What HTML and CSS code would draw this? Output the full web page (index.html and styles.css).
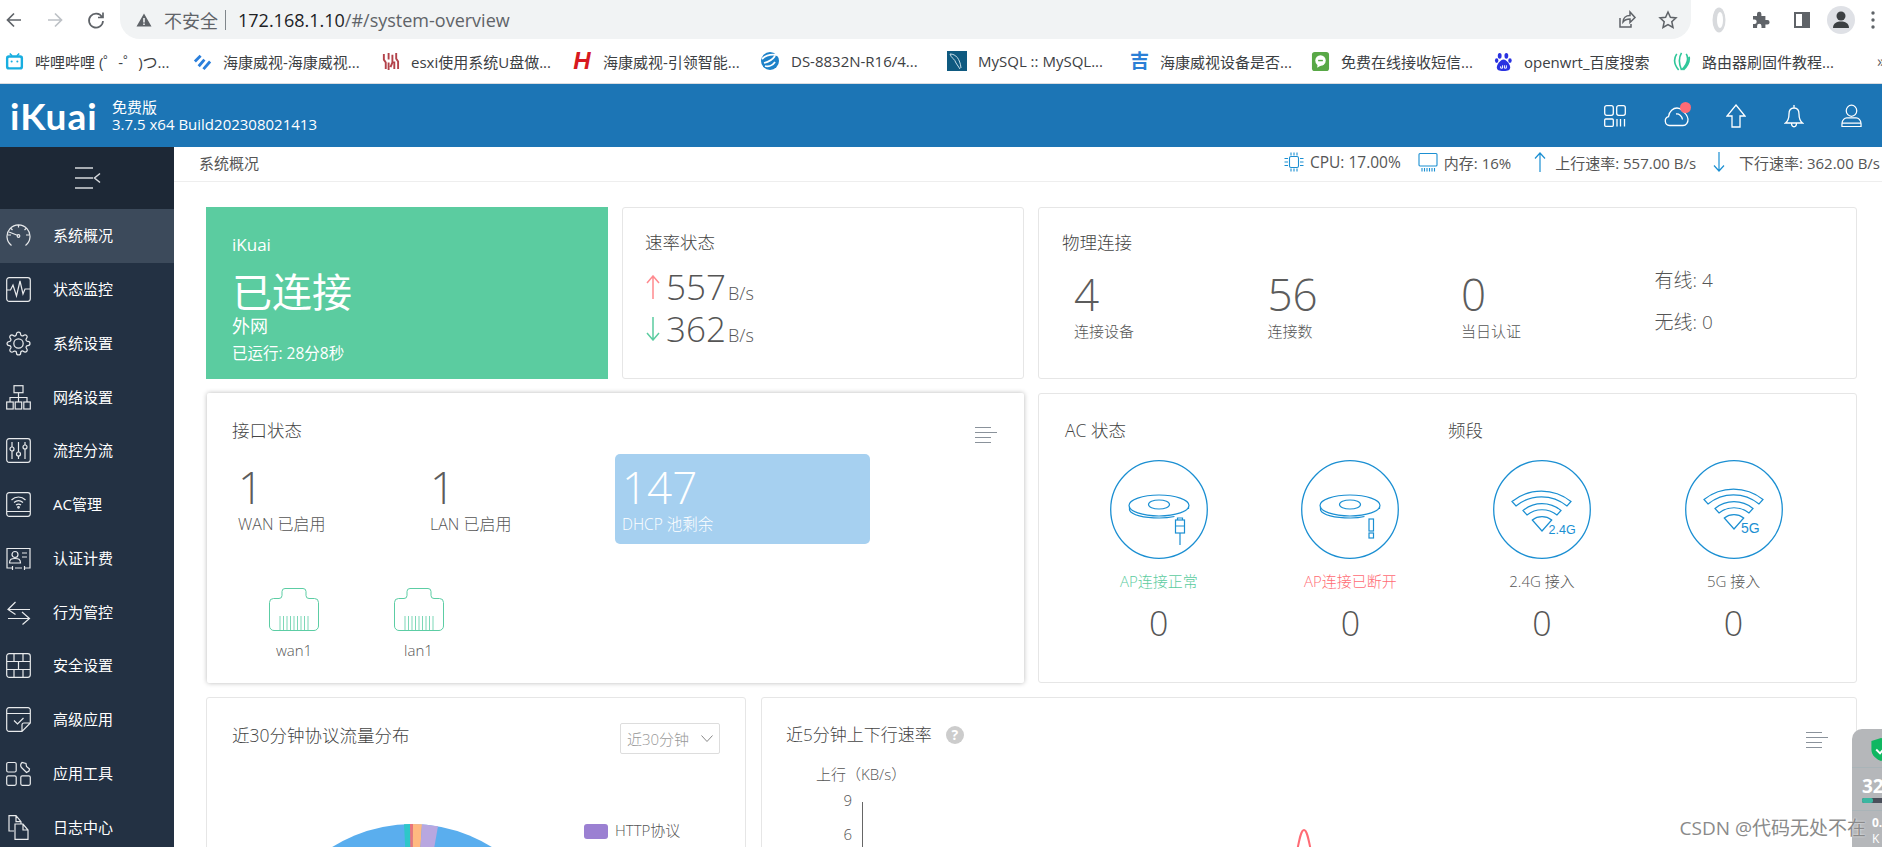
FILE: index.html
```html
<!DOCTYPE html>
<html lang="zh-CN">
<head>
<meta charset="utf-8">
<title>iKuai</title>
<link rel="stylesheet" href="styles.css">
</head>
<body>
<header class="toolbar">
  <div class="nav-btns">
    <svg class="nav-ico" viewBox="0 0 20 20"><path d="M17 10H4M10 3.5 3.5 10l6.5 6.500"/></svg>
    <svg class="nav-ico nav-off" viewBox="0 0 20 20"><path d="M3 10h13M10 3.500 16.500 10 10 16.500"/></svg>
    <svg class="nav-ico" viewBox="0 0 20 20"><path d="M16 7a7 7 0 1 0 1 4M17 2.500V7.500h-5"/></svg>
  </div>
  <div class="omnibox">
    <div class="url">
      <svg class="warn" viewBox="0 0 16 16"><path d="M8 1.500 15.500 14.500H.5zM7.200 6v4.500h1.600V6zM7.200 11.500v1.500h1.600v-1.500z" fill-rule="evenodd"/></svg>
      <span class="insecure">不安全</span><span class="url-sep"></span><span class="host">172.168.1.10</span><span class="path">/#/system-overview</span>
    </div>
    <div class="omni-actions">
      <svg class="chrome-ico" viewBox="0 0 20 20"><path d="M3 8v9h11v-3M6 12c0-4 3-6.500 7-6.500V2l5 5.500-5 5V9c-3 0-5.500 1-7 3z"/></svg>
      <svg class="chrome-ico" viewBox="0 0 20 20"><path d="m10 2 2.400 5.300 5.600.6-4.200 3.800 1.200 5.800-5-3-5 3 1.200-5.800L2 7.900l5.600-.6z"/></svg>
    </div>
  </div>
  <div class="chrome-right">
    <svg class="ext-pill" viewBox="0 0 14 26"><ellipse cx="7" cy="13" rx="6.500" ry="12.500" fill="#d8dadd"/><ellipse cx="8" cy="13" rx="3" ry="8" fill="#fff"/></svg>
    <svg class="ext-ico" viewBox="0 0 20 20"><path class="solid" d="M3 6h4V4a2.200 2.200 0 0 1 4.400 0v2h4v4h2a2.200 2.200 0 0 1 0 4.400h-2V18H11.500v-2a2.200 2.200 0 0 0-4.400 0v2H3v-4h1.500a2.200 2.200 0 0 0 0-4.400H3z"/></svg>
    <svg class="ext-ico" viewBox="0 0 20 20"><path class="solid" fill-rule="evenodd" d="M2 2h16v16H2zM4 4v12h6V4z"/></svg>
    <svg class="avatar" viewBox="0 0 28 28"><circle cx="14" cy="14" r="14" fill="#dfe1e6"/><circle cx="14" cy="10" r="4.500" fill="#3c4043"/><path d="M6 22c0-5 4-6.500 8-6.500s8 1.500 8 6.500z" fill="#3c4043"/></svg>
    <svg class="kebab" viewBox="0 0 4 20"><circle cx="2" cy="3" r="1.700"/><circle cx="2" cy="10" r="1.700"/><circle cx="2" cy="17" r="1.700"/></svg>
  </div>
</header>

<nav class="bookmarks">
  <a class="bm bm-1"><svg class="bm-ico" viewBox="0 0 20 20"><path d="M5 1.500 7.500 4M15 1.500 12.500 4" stroke="#18aee0" stroke-width="1.600" fill="none"/><rect x="1" y="3.500" width="18" height="15" rx="3" fill="#18aee0"/><rect x="3.500" y="6" width="13" height="10" rx="1" fill="#fff"/><circle cx="7" cy="10" r="1.100" fill="#18aee0"/><circle cx="13" cy="10" r="1.100" fill="#18aee0"/></svg><span>哔哩哔哩 (゜-゜)つ...</span></a>
  <a class="bm bm-2"><svg class="bm-ico" viewBox="0 0 20 20"><path d="m2 10 6-6M6 15l6-7M11 18l7-8" stroke="#2a7fdc" stroke-width="3" fill="none"/></svg><span>海康威视-海康威视...</span></a>
  <a class="bm bm-3"><svg class="bm-ico" viewBox="0 0 20 20"><path d="M3 2v6l2 3v7M8 1v7M8 11v8M12 3v8l-2 5M16 1v6l2 3v8M14 10v8" stroke="#b3424a" stroke-width="2" fill="none"/></svg><span>esxi使用系统U盘做...</span></a>
  <a class="bm bm-4"><span class="bm-h">H</span><span>海康威视-引领智能...</span></a>
  <a class="bm bm-5"><svg class="bm-ico bm-ico-lg" viewBox="0 0 20 20"><circle cx="10" cy="10" r="9" fill="#1d82c9"/><path d="M4 12c4-1 9-4 11-7M5 15c4 1 8-1 10-4M2 8c3-3 9-5 15-4" stroke="#fff" stroke-width="1.800" fill="none"/></svg><span>DS-8832N-R16/4...</span></a>
  <a class="bm bm-6"><svg class="bm-ico bm-ico-lg" viewBox="0 0 20 20"><rect width="20" height="20" fill="#0f5a80"/><path d="M3 3c6 0 10 5 11 14M3 3c1 4 5 5 6 9l4 6" stroke="#c9e0ea" stroke-width="1" fill="none"/></svg><span>MySQL :: MySQL...</span></a>
  <a class="bm bm-7"><span class="bm-ji">吉</span><span>海康威视设备是否...</span></a>
  <a class="bm bm-8"><svg class="bm-ico" viewBox="0 0 20 20"><rect x="1" width="18" height="20" rx="3" fill="#58a846"/><circle cx="10" cy="9" r="5.500" fill="#fff"/><path d="m7 13-.5 3.500L11 14z" fill="#fff"/><path d="M7.500 9h5" stroke="#58a846" stroke-width="1.500"/></svg><span>免费在线接收短信...</span></a>
  <a class="bm bm-9"><svg class="bm-ico" viewBox="0 0 20 20" fill="#2932e1"><ellipse cx="6" cy="4" rx="2" ry="3"/><ellipse cx="13" cy="4" rx="2" ry="3"/><ellipse cx="2.800" cy="9" rx="1.800" ry="2.500"/><ellipse cx="16.800" cy="9" rx="1.800" ry="2.500"/><path d="M10 8c3 0 7 5 7 8s-2 4-7 4-7-1-7-4 4-8 7-8z"/><path d="M7 15v2h2v-3M11 14v3h2v-3" stroke="#fff" fill="none"/></svg><span>openwrt_百度搜索</span></a>
  <a class="bm bm-10"><svg class="bm-ico" viewBox="0 0 20 20" fill="none" stroke="#2fc79a" stroke-width="1.700"><path d="M5 2C1 8 2 13 7 19M10 1c-3 5-3 11 0 18M15 2c3 5 1 11-5 17M18 5c1 5-2 10-6 14"/></svg><span>路由器刷固件教程...</span></a>
  <span class="bm-more">»</span>
</nav>

<header class="appbar">
  <div class="brand">
    <span class="logo">iKuai</span>
    <div class="edition"><span>免费版</span><span>3.7.5 x64 Build202308021413</span></div>
  </div>
  <div class="app-actions">
    <svg class="act-ico" viewBox="0 0 22 22"><rect x=".7" y=".7" width="8.600" height="9.600" rx="2"/><rect x="12.700" y=".7" width="8.600" height="9.600" rx="2"/><rect x=".7" y="14" width="8.600" height="7.300" rx="1"/><path d="M13 14v7.500M16.500 14v7.500M20.500 14v7.500"/></svg>
    <div class="cloud-wrap">
      <svg class="act-ico act-cloud" viewBox="0 0 26 22"><path d="M5.500 20.500a4.500 4.500 0 0 1-1-8.800C5 6 9.500 3 13 3c2 0 4 1 5 2.500M18 6c3.500 2 5.500 5 6 8 .3 3.500-2 6.500-5 6.500H5.500M12 9c3-.5 6 2 6.500 5.500"/></svg>
      <span class="cloud-dot"></span>
    </div>
    <svg class="act-ico act-up" viewBox="0 0 20 24"><path d="M10 1 19 12h-5v11H6V12H1z"/></svg>
    <svg class="act-ico act-bell" viewBox="0 0 20 24"><path d="M10 1v3M10 4c-3.500 0-5 3-5 6 0 4-1 7-3.500 9h17C16 17 15 14 15 10c0-3-1.500-6-5-6zM7.500 19c0 5 5 5 5 0"/></svg>
    <svg class="act-ico act-user" viewBox="0 0 22 24"><ellipse cx="11" cy="6.500" rx="5.500" ry="5.800"/><path d="M1 23v-3c0-4 3-6 5-6h10c2 0 5 2 5 6v3zM1 19.500h20"/></svg>
  </div>
</header>

<div class="app">
  <aside class="sidebar">
    <div class="side-toggle">
      <svg class="toggle-ico" viewBox="0 0 26 22"><path d="M0 1h18M0 11h18M0 21h18M25 6.500l-5.500 4.500 5.500 4.500"/></svg>
    </div>
    <ul class="menu">
      <li class="menu-item is-active"><svg class="menu-ico" viewBox="0 0 25 25"><path d="M5.500 22.500A11.500 11.500 0 1 1 19.500 22.500M12.500 1.500v3M2 12h3M20 12h3M4.500 5l2 2M18.500 7l2-2M3 9l9 3.500"/><circle cx="12.500" cy="13" r="1.300"/></svg><span>系统概况</span></li>
      <li class="menu-item"><svg class="menu-ico" viewBox="0 0 25 25"><rect x=".7" y=".7" width="23.600" height="23.600" rx="2.500"/><path d="M1 13h3.500l2.500-5 3.500 11L14 4l3 13 2-5h5"/></svg><span>状态监控</span></li>
      <li class="menu-item"><svg class="menu-ico" viewBox="0 0 24 24"><circle cx="12" cy="12" r="4.500"/><path d="M19.400 15a1.650 1.650 0 0 0 .33 1.820l.06.06a2 2 0 0 1 0 2.830 2 2 0 0 1-2.830 0l-.06-.06a1.650 1.650 0 0 0-1.820-.33 1.650 1.650 0 0 0-1 1.510V21a2 2 0 0 1-2 2 2 2 0 0 1-2-2v-.09A1.650 1.650 0 0 0 9 19.400a1.650 1.650 0 0 0-1.820.33l-.06.06a2 2 0 0 1-2.830 0 2 2 0 0 1 0-2.830l.06-.06a1.650 1.650 0 0 0 .33-1.820 1.650 1.650 0 0 0-1.510-1H3a2 2 0 0 1-2-2 2 2 0 0 1 2-2h.09A1.650 1.650 0 0 0 4.600 9a1.650 1.650 0 0 0-.33-1.820l-.06-.06a2 2 0 0 1 0-2.830 2 2 0 0 1 2.830 0l.06.06a1.650 1.650 0 0 0 1.820.33H9a1.650 1.650 0 0 0 1-1.510V3a2 2 0 0 1 2-2 2 2 0 0 1 2 2v.09a1.650 1.650 0 0 0 1 1.510 1.650 1.650 0 0 0 1.820-.33l.06-.06a2 2 0 0 1 2.830 0 2 2 0 0 1 0 2.830l-.06.06a1.650 1.650 0 0 0-.33 1.820V9a1.650 1.650 0 0 0 1.510 1H21a2 2 0 0 1 2 2 2 2 0 0 1-2 2h-.09a1.650 1.650 0 0 0-1.510 1z"/></svg><span>系统设置</span></li>
      <li class="menu-item"><svg class="menu-ico" viewBox="0 0 25 25"><rect x="8" y=".7" width="9" height="7"/><rect x=".7" y="17" width="6.500" height="7"/><rect x="9.200" y="17" width="6.500" height="7"/><rect x="17.800" y="17" width="6.500" height="7"/><path d="M12.500 8v9M4 17v-4.500h17V17"/></svg><span>网络设置</span></li>
      <li class="menu-item"><svg class="menu-ico" viewBox="0 0 25 25"><rect x=".7" y=".7" width="23.600" height="23.600" rx="2.500"/><path d="M6 4v5M6 13v8M12.500 4v10M12.500 18v3M19 4v3M19 11v10"/><circle cx="6" cy="11" r="2"/><circle cx="12.500" cy="16" r="2"/><circle cx="19" cy="9" r="2"/></svg><span>流控分流</span></li>
      <li class="menu-item"><svg class="menu-ico" viewBox="0 0 25 25"><rect x=".7" y=".7" width="23.600" height="23.600" rx="2.500"/><path d="M1 19.500h23M5.500 8c4-4 10-4 14 0M8 10.500c3-2.500 6-2.500 9 0M10 13c1.500-1 3.500-1 5 0"/><circle cx="12.500" cy="15.300" r=".8"/></svg><span>AC管理</span></li>
      <li class="menu-item"><svg class="menu-ico" viewBox="0 0 25 25"><path d="M6 22H1V2.500h23V22h-5M9 22h7"/><circle cx="9" cy="8.500" r="3"/><path d="M3.500 17c0-4 2-4.500 5.500-4.500s5.500.5 5.500 4.500zM16 7h5M16 11h5M6.500 20v4M18.500 20v4"/></svg><span>认证计费</span></li>
      <li class="menu-item"><svg class="menu-ico" viewBox="0 0 25 25"><path d="M24 9.500H3M9.500 2 2 9.500l7.500 5M2 18.500h21M16 12l7.500 6.500-7 6"/></svg><span>行为管控</span></li>
      <li class="menu-item"><svg class="menu-ico" viewBox="0 0 25 25"><rect x=".7" y=".7" width="23.600" height="23.600" rx="2.500"/><path d="M1 8.500h23M1 16.500h23M8 1v7.500M17 1v7.500M12.500 8.500v8M8 16.500v8M17 16.500v8"/></svg><span>安全设置</span></li>
      <li class="menu-item"><svg class="menu-ico" viewBox="0 0 25 25"><path d="M24.300 16V3A2.300 2.300 0 0 0 22 .7H3A2.300 2.300 0 0 0 .7 3v19A2.300 2.300 0 0 0 3 24.300h13zM24.300 16H18a2 2 0 0 0-2 2v6.300M1 6.500h23M8 13.500l3.500 3.500 6-6"/></svg><span>高级应用</span></li>
      <li class="menu-item"><svg class="menu-ico" viewBox="0 0 25 25"><rect x=".7" y="1.500" width="9.500" height="9.500" rx="1.500"/><rect x=".7" y="14.800" width="9.500" height="9.500" rx="1.500"/><rect x="14.800" y="14.800" width="9.500" height="9.500" rx="1.500"/><path d="M16 1.500a3.500 3.500 0 0 0-.5 5l5 5 2.500-1.500 .5-2-3-2.500-.5-3z"/></svg><span>应用工具</span></li>
      <li class="menu-item"><svg class="menu-ico" viewBox="0 0 25 25"><path d="M8 16H3V.7h7l5 6V9M10 .7v6h5M9 9h8l5 6v9.300H9zM17 9v6h5"/></svg><span>日志中心</span></li>
    </ul>
  </aside>

  <main class="main">
    <div class="crumbs">
      <span class="crumb-title">系统概况</span>
      <div class="sys-stats">
        <svg class="st-ico" viewBox="0 0 20 20"><rect x="5.500" y="4.500" width="9" height="11" rx="1.500"/><path d="M7 .5v3M10 .5v3M13 .5v3M7 16.500v3M10 16.500v3M13 16.500v3M.5 6.500h3.500M.5 10h3.500M.5 13.500h3.500M16 6.500h3.500M16 10h3.500M16 13.500h3.500"/></svg>
        <span class="st-text st-cpu">CPU: 17.00%</span>
        <svg class="st-ico" viewBox="0 0 20 20"><rect x="1" y="1.500" width="18" height="12.500" rx="1"/><path d="M4 16v3.500M6.500 16v3.500M9 16v3.500M11.500 16v3.500M14 16v3.500M16.500 16v3.500"/></svg>
        <span class="st-text st-ram">内存: 16%</span>
        <svg class="st-arrow st-up" viewBox="0 0 12 20"><path d="M6 20V1M1 6.500 6 1l5 5.500"/></svg>
        <span class="st-text st-upt">上行速率: 557.00 B/s</span>
        <svg class="st-arrow st-down" viewBox="0 0 12 20"><path d="M6 0v19M1 13.500 6 19l5-5.500"/></svg>
        <span class="st-text">下行速率: 362.00 B/s</span>
      </div>
    </div>

    <div class="content">
      <section class="row row-top">
        <article class="tile-green">
          <div class="tg-name">iKuai</div>
          <div class="tg-state">已连接</div>
          <div class="tg-net">外网</div>
          <div class="tg-time">已运行: 28分8秒</div>
        </article>
        <article class="card card-speed">
          <h3 class="card-title">速率状态</h3>
          <div class="speed-line speed-first">
            <svg class="speed-arrow arrow-red" viewBox="0 0 14 24"><path d="M7 24V1M1 8l6-7 6 7"/></svg>
            <span class="speed-num">557</span><span class="speed-unit">B/s</span>
          </div>
          <div class="speed-line">
            <svg class="speed-arrow arrow-green" viewBox="0 0 14 24"><path d="M7 0v23M1 16l6 7 6-7"/></svg>
            <span class="speed-num">362</span><span class="speed-unit">B/s</span>
          </div>
        </article>
        <article class="card card-phys">
          <h3 class="card-title">物理连接</h3>
          <div class="phys-grid">
            <div><div class="big-num">4</div><div class="big-label">连接设备</div></div>
            <div><div class="big-num">56</div><div class="big-label">连接数</div></div>
            <div><div class="big-num">0</div><div class="big-label">当日认证</div></div>
            <div class="phys-side"><div>有线: 4</div><div>无线: 0</div></div>
          </div>
        </article>
      </section>

      <section class="row row-mid">
        <article class="card card-iface">
          <div class="iface-head">
            <h3 class="card-title">接口状态</h3>
            <svg class="list-ico" viewBox="0 0 22 16"><path d="M0 .5h16M0 5.500h22M0 10.500h16M0 15.500h16"/></svg>
          </div>
          <div class="iface-stats">
            <div class="iface-stat"><div class="big-num">1</div><div class="big-label iface-label">WAN 已启用</div></div>
            <div class="iface-stat"><div class="big-num">1</div><div class="big-label iface-label">LAN 已启用</div></div>
            <div class="dhcp"><div class="big-num dhcp-num">147</div><div class="big-label dhcp-label">DHCP 池剩余</div></div>
          </div>
          <div class="ports">
            <div class="port"><svg class="port-ico" viewBox="0 0 50 43"><path class="port-body" d="M16 .5h18a3 3 0 0 1 3 3v4a3 3 0 0 0 3 3h5.500a4 4 0 0 1 4 4V38a4.500 4.500 0 0 1-4.500 4.500H5A4.500 4.500 0 0 1 .5 38V14.500a4 4 0 0 1 4-4H10a3 3 0 0 0 3-3v-4a3 3 0 0 1 3-3z"/><path class="port-pins" d="M11 28v14M14.500 28v14M18 28v14M21.500 28v14M25 28v14M28.500 28v14M32 28v14M35.500 28v14M39 28v14"/></svg><span>wan1</span></div>
            <div class="port"><svg class="port-ico" viewBox="0 0 50 43"><path class="port-body" d="M16 .5h18a3 3 0 0 1 3 3v4a3 3 0 0 0 3 3h5.500a4 4 0 0 1 4 4V38a4.500 4.500 0 0 1-4.500 4.500H5A4.500 4.500 0 0 1 .5 38V14.500a4 4 0 0 1 4-4H10a3 3 0 0 0 3-3v-4a3 3 0 0 1 3-3z"/><path class="port-pins" d="M11 28v14M14.500 28v14M18 28v14M21.500 28v14M25 28v14M28.500 28v14M32 28v14M35.500 28v14M39 28v14"/></svg><span>lan1</span></div>
          </div>
        </article>
        <article class="card card-ac">
          <div class="ac-heads"><h3 class="card-title">AC 状态</h3><h3 class="card-title">频段</h3></div>
          <div class="ac-grid">
            <div class="ac-col">
              <svg class="ac-ico" viewBox="0 0 98 99"><ellipse class="ac-ring" cx="49" cy="49.500" rx="48.300" ry="48.800"/><ellipse cx="49" cy="45.500" rx="30" ry="10.500"/><ellipse cx="49" cy="44.500" rx="10.500" ry="4.500"/><path d="M19.500 47v3c2 5 14 8 30 8 5 0 10-.5 15-1.500M78.500 47v2"/><rect x="65.500" y="60" width="9" height="13"/><path d="M67.500 60v-2h5v2M65.500 66h9M70 73v12"/></svg>
              <div class="ac-label ac-ok">AP连接正常</div><div class="ac-val">0</div>
            </div>
            <div class="ac-col">
              <svg class="ac-ico" viewBox="0 0 98 99"><ellipse class="ac-ring" cx="49" cy="49.500" rx="48.300" ry="48.800"/><ellipse cx="49" cy="45.500" rx="30" ry="10.500"/><ellipse cx="49" cy="44.500" rx="10.500" ry="4.500"/><path d="M19.500 47v3c2 5 14 8 30 8 5 0 10-.5 14-1.500M78.500 47v2"/><rect x="68" y="59" width="4.500" height="12"/><rect x="68" y="73" width="4.500" height="5"/></svg>
              <div class="ac-label ac-bad">AP连接已断开</div><div class="ac-val">0</div>
            </div>
            <div class="ac-col">
              <svg class="ac-ico" viewBox="0 0 98 99"><ellipse class="ac-ring" cx="49" cy="49.500" rx="48.300" ry="48.800"/><path d="M19 41.500A47 47 0 0 1 78 41.500L74 46A40 40 0 0 0 23 46zM30 50.500A30 30 0 0 1 68 50.500L64 55A24 24 0 0 0 34 55zM39.300 60A16 16 0 0 1 58.700 60L49 71z"/><text class="ac-badge ac-badge-sm" x="55.500" y="74">2.4G</text></svg>
              <div class="ac-label">2.4G 接入</div><div class="ac-val">0</div>
            </div>
            <div class="ac-col">
              <svg class="ac-ico" viewBox="0 0 98 99"><ellipse class="ac-ring" cx="49" cy="49.500" rx="48.300" ry="48.800"/><path d="M19 39.500A47 47 0 0 1 78 39.500L74 44A40 40 0 0 0 23 44zM30 48.500A30 30 0 0 1 68 48.500L64 53A24 24 0 0 0 34 53zM39.300 58A16 16 0 0 1 58.700 58L49 69z"/><text class="ac-badge" x="56" y="73">5G</text></svg>
              <div class="ac-label">5G 接入</div><div class="ac-val">0</div>
            </div>
          </div>
        </article>
      </section>

      <section class="row row-bottom">
        <article class="card card-proto">
          <div class="proto-head">
            <h3 class="card-title title-lg">近30分钟协议流量分布</h3>
            <div class="select"><span>近30分钟</span><svg class="chev" viewBox="0 0 12 7"><path d="m.5.5 5.500 6 5.500-6"/></svg></div>
          </div>
          <div class="proto-body">
            <svg class="pie" viewBox="0 0 300 300">
              <circle cx="150" cy="150" r="150" fill="#5aaeee"/>
              <path d="M150 150 142 .2 148 0z" fill="#2ec7c9"/>
              <path d="M150 150 148 0 151 0z" fill="#e8747c"/>
              <path d="M150 150 151 0 160 .33z" fill="#ffb980"/>
              <path d="M150 150 160 .33 176 2.280z" fill="#b8a7e0"/>
            </svg>
            <div class="legend"><span class="swatch"></span><span class="legend-text">HTTP协议</span></div>
          </div>
        </article>
        <article class="card card-rate">
          <div class="rate-head">
            <div class="rate-title"><h3 class="card-title title-lg title-rate">近5分钟上下行速率</h3><span class="help">?</span></div>
            <svg class="list-ico" viewBox="0 0 22 16"><path d="M0 .5h16M0 5.500h22M0 10.500h16M0 15.500h16"/></svg>
          </div>
          <svg class="rate-chart" viewBox="0 0 1050 200">
            <text class="axis-name" x="29" y="15">上行（KB/s）</text>
            <text class="axis-tick" x="65" y="41">9</text>
            <text class="axis-tick" x="65" y="75">6</text>
            <path class="axis-line" d="M75.500 37V200"/>
            <path class="rate-line" d="M501 125C511 90 512 65 517 65S523 90 533 125"/>
          </svg>
        </article>
      </section>
    </div>
  </main>
</div>

<aside class="float-widget">
  <div class="fw-top"><svg class="fw-shield" viewBox="0 0 20 24"><path d="M10 0 20 3v9c0 6-5 10-10 12C5 22 0 18 0 12V3z" fill="#10b761"/><path d="m5 12 4 4 6-7" stroke="#fff" stroke-width="2" fill="none"/></svg></div>
  <div class="fw-mid"><span class="fw-num">32</span><span class="fw-bar"><span class="fw-fill"></span></span></div>
  <div class="fw-low"><span class="fw-small">0.</span><span class="fw-tiny">K</span></div>
</aside>
<div class="watermark">CSDN @代码无处不在</div>
</body>
</html>
```

FILE: styles.css
```css
* { box-sizing: border-box; }
html, body { margin: 0; height: 847px; overflow: hidden; }
body {
  position: relative;
  display: flex;
  flex-direction: column;
  width: 1882px;
  background: #fff;
  color: #555;
  font-family: "Open Sans", "Noto Sans CJK SC", sans-serif;
}
h3 { margin: 0; font-weight: 400; }

/* browser chrome */
.toolbar { flex: 0 0 39px; display: flex; align-items: flex-start; background: #fff; }
.nav-btns { flex: 0 0 120px; height: 39px; display: flex; align-items: center; gap: 21px; padding-left: 4px; }
.nav-ico { width: 20px; height: 20px; fill: none; stroke: #5f6368; stroke-width: 1.700; }
.nav-off { stroke: #bdc1c6; }
.omnibox { flex: 0 0 1571px; height: 39px; display: flex; align-items: center; justify-content: space-between; background: #f1f3f4; border-radius: 0 0 20px 20px; padding: 0 13px 0 16px; }
.url { display: flex; align-items: center; font-size: 18px; }
.warn { width: 16px; height: 16px; fill: #5f6368; margin-right: 12px; }
.insecure { color: #5f6368; }
.url-sep { width: 1px; height: 20px; background: #80868b; margin: 0 12px 0 7px; }
.host { color: #202124; }
.path { color: #5f6368; }
.omni-actions { display: flex; gap: 21px; }
.chrome-ico { width: 20px; height: 20px; fill: none; stroke: #5f6368; stroke-width: 1.500; }
.chrome-right { flex: 1; height: 39px; display: flex; align-items: center; padding-left: 21px; }
.ext-pill { width: 14px; height: 26px; margin-right: 24px; }
.ext-ico { width: 20px; height: 20px; margin-right: 22px; }
.ext-ico + .ext-ico { margin-right: 15px; }
.solid { fill: #5f6368; }
.avatar { width: 28px; height: 28px; margin-right: 16px; flex: none; }
.kebab { width: 4px; height: 20px; fill: #5f6368; flex: none; }

.bookmarks { flex: 0 0 45px; display: flex; align-items: center; position: relative; padding-left: 5px; border-bottom: 1px solid #dadce0; font-size: 15px; color: #3c4043; white-space: nowrap; }
.bm { display: flex; align-items: center; gap: 11px; flex: none; }
.bm-1 { width: 188px; }
.bm-2 { width: 188px; }
.bm-3 { width: 191px; }
.bm-4 { width: 188px; }
.bm-5 { width: 187px; }
.bm-6 { width: 183px; }
.bm-7 { width: 181px; }
.bm-8 { width: 183px; }
.bm-9 { width: 178px; }
.bm-10 { width: 205px; }
.bm-ico { width: 19px; height: 19px; flex: none; }
.bm-ico-lg { width: 20px; height: 20px; }
.bm-h { width: 20px; font: italic 700 24px "Liberation Sans", sans-serif; color: #d71920; text-align: center; }
.bm-ji { width: 19px; font-size: 19px; font-weight: 700; color: #2b7fd6; line-height: 20px; }
.bm-more { color: #5f6368; font-size: 16px; }

/* app header */
.appbar { flex: 0 0 63px; display: flex; align-items: center; justify-content: space-between; background: #1c75b5; color: #fff; padding: 0 20px 0 10px; }
.brand { display: flex; align-items: center; gap: 15px; }
.logo { width: 87px; font: 700 37px/38px "Lato", sans-serif; letter-spacing: 1px; }
.edition { display: flex; flex-direction: column; font-size: 15px; line-height: 17px; }
.app-actions { display: flex; align-items: center; }
.act-ico { width: 22px; height: 22px; fill: none; stroke: #fff; stroke-width: 1.300; flex: none; }
.cloud-wrap { position: relative; width: 26px; height: 22px; margin-left: 38px; }
.act-cloud { width: 26px; }
.cloud-dot { position: absolute; top: -3px; right: -1px; width: 11px; height: 11px; border-radius: 50%; background: #ff6b75; }
.act-up { width: 20px; height: 24px; margin-left: 36px; }
.act-bell { width: 20px; height: 24px; margin-left: 38px; }
.act-user { width: 21px; height: 24px; margin-left: 37px; }

/* layout */
.app { flex: 1; min-height: 0; display: flex; overflow: hidden; }
.sidebar { flex: 0 0 174px; background: #233143; overflow: hidden; }
.side-toggle { height: 62px; background: #1d2836; display: flex; align-items: center; justify-content: center; padding-left: 2px; }
.toggle-ico { width: 26px; height: 22px; fill: none; stroke: #d5d8dc; stroke-width: 1.500; }
.menu { margin: 0; padding: 0; list-style: none; }
.menu-item { height: 53.750px; display: flex; align-items: center; gap: 22px; padding-left: 6px; color: #fff; font-size: 15px; }
.menu-item span { margin-top: -2px; }
.menu-item.is-active { background: #3c4a5b; }
.menu-ico { width: 25px; height: 25px; flex: none; fill: none; stroke: #e8eaec; stroke-width: 1.200; }

.main { flex: 1; min-width: 0; overflow: hidden; }
.crumbs { height: 35px; display: flex; align-items: center; justify-content: space-between; border-bottom: 1px solid #eee; padding: 0 2px 4px 25px; font-size: 15px; white-space: nowrap; }
.sys-stats { display: flex; align-items: center; }
.st-ico { width: 20px; height: 20px; fill: none; stroke: #1b8fd2; stroke-width: 1.100; margin-right: 6px; }
.st-text { font-size: 15px; }
.st-cpu { margin-right: 17px; font-size: 15.500px; }
.st-ram { margin-right: 23px; }
.st-arrow { width: 12px; height: 20px; fill: none; stroke: #1b8fd2; stroke-width: 1.200; margin-right: 9px; }
.st-upt { margin-right: 17px; }
.st-down { margin-right: 14px; }

.content { padding: 25px 25px 0 32px; display: flex; flex-direction: column; gap: 14px; }
.row { display: grid; column-gap: 14px; }
.row-top { grid-template-columns: 402px 402px 819px; height: 172px; }
.row-mid { grid-template-columns: 818px 819px; height: 290px; }
.row-bottom { grid-template-columns: 540px 1096px; column-gap: 15px; height: 300px; }

.card { background: #fff; border: 1px solid #e6e6e6; border-radius: 3px; }
.card-title { font-size: 17.500px; line-height: 24px; font-weight: 300; color: #444; }

/* green tile */
.tile-green { background: #5bcca0; color: #fff; padding: 28px 0 0 26px; }
.tg-name { font-size: 17px; line-height: 20px; }
.tg-state { font-size: 40px; line-height: 44px; margin-top: 15px; }
.tg-net { font-size: 18px; line-height: 20px; margin-top: 2px; }
.tg-time { font-size: 15.500px; line-height: 20px; margin-top: 7px; }

/* speed */
.card-speed { padding: 22px 0 0 22px; }
.speed-line { display: flex; align-items: center; height: 42px; }
.speed-first { margin-top: 12px; }
.speed-arrow { width: 14px; height: 24px; fill: none; stroke-width: 1.500; margin: 0 6px 0 1px; flex: none; }
.arrow-red { stroke: #ff8a8f; }
.arrow-green { stroke: #5bcca0; }
.speed-num { font-size: 35px; font-weight: 300; line-height: 42px; width: 62px; color: #555; }
.speed-unit { font-size: 18px; font-weight: 300; margin-top: 12px; }

/* physical */
.card-phys { padding: 22px 0 0 23px; }
.phys-grid { display: grid; grid-template-columns: repeat(4, 193.500px); margin: 18px 0 0 12px; }
.big-num { font-size: 44px; line-height: 44px; font-weight: 300; color: #5c5c5c; }
.big-label { font-size: 15px; line-height: 22px; margin-top: 4px; font-weight: 300; color: #555; }
.phys-side { font-size: 19px; line-height: 24px; font-weight: 300; display: flex; flex-direction: column; gap: 18px; margin-top: -4px; }

/* interfaces */
.card-iface { border: 0; box-shadow: 0 0 5px rgba(0, 0, 0, .28); padding: 25px 27px 0 25px; border-radius: 2px; margin-left: 1px; width: 817px; }
.iface-head { display: flex; justify-content: space-between; align-items: flex-end; }
.iface-head .list-ico { margin-bottom: -1px; }
.list-ico { width: 22px; height: 16px; fill: none; stroke: #8a929b; stroke-width: 1; flex: none; }
.iface-stats { display: grid; grid-template-columns: 192px 185px 255px; margin: 12px 0 0 6px; }
.iface-stat { padding-top: 11px; }
.iface-label { font-size: 16px; }
.dhcp { height: 90px; background: #a6d0f0; border-radius: 5px; padding: 11px 0 0 7px; color: #fff; }
.dhcp-num, .dhcp-label { color: #fff; }
.dhcp-label { font-size: 15.500px; }
.ports { display: flex; gap: 24.500px; margin: 44px 0 0 12px; }
.port { width: 100px; display: flex; flex-direction: column; align-items: center; gap: 9px; font-size: 15px; line-height: 20px; font-weight: 300; }
.port-ico { width: 50px; height: 43px; }
.port-body { fill: none; stroke: #5ccda4; stroke-width: 1; }
.port-pins { fill: none; stroke: #5ccda4; stroke-width: .8; }

/* AC */
.card-ac { padding: 24px 0 0 26px; }
.ac-heads { display: grid; grid-template-columns: 383px 383px; }
.ac-grid { display: grid; grid-template-columns: repeat(4, 191.600px); margin: 18px 0 0 -2px; }
.ac-col { display: flex; flex-direction: column; align-items: center; }
.ac-ico { width: 98px; height: 99px; fill: none; stroke: #1b8fd2; stroke-width: 1.200; }
.ac-ring { stroke-width: 1.300; }
.ac-badge { fill: #1b8fd2; stroke: none; font-size: 14px; font-family: "Liberation Sans", sans-serif; }
.ac-badge-sm { font-size: 12.500px; }
.ac-label { font-size: 15px; line-height: 22px; margin-top: 11px; font-weight: 300; }
.ac-ok { color: #5bcca0; }
.ac-bad { color: #ff6b75; }
.ac-val { font-size: 34px; line-height: 40px; margin-top: 11px; font-weight: 300; }

/* bottom */
.card-proto { padding: 25px 25px 0 25px; }
.proto-head { display: flex; justify-content: space-between; align-items: flex-start; }
.title-lg { line-height: 24px; }
.title-rate { font-size: 17px; }
.select { width: 100px; height: 31px; display: flex; align-items: center; justify-content: space-between; border: 1px solid #ddd; border-radius: 2px; padding: 0 6px; font-size: 15px; color: #999; font-weight: 300; }
.chev { width: 12px; height: 7px; fill: none; stroke: #888; stroke-width: 1; }
.proto-body { display: flex; align-items: flex-start; margin: 70px 0 0 30px; gap: 22px; }
.pie { width: 300px; height: 300px; flex: none; }
.legend { display: flex; align-items: center; gap: 7px; font-size: 15px; line-height: 15px; font-weight: 300; }
.legend-text { margin-top: -2px; }
.swatch { width: 24px; height: 15px; background: #9b80d2; border-radius: 3px; }

.card-rate { padding: 25px 28px 0 24px; }
.rate-head { display: flex; justify-content: space-between; align-items: flex-start; height: 31px; }
.rate-title { display: flex; align-items: center; gap: 14px; }
.help { width: 18px; height: 18px; border-radius: 50%; background: #ccc; color: #fff; font-size: 14px; font-weight: 700; line-height: 18px; text-align: center; }
.card-rate .list-ico { margin-top: 9px; }
.rate-chart { display: block; width: 1050px; height: 200px; margin: 11px 0 0 1px; }
.axis-name { font-size: 15px; font-weight: 300; fill: #555; }
.axis-tick { font-size: 15px; font-weight: 300; fill: #555; text-anchor: end; }
.axis-line { stroke: #666; stroke-width: 1; fill: none; }
.rate-line { stroke: #ff6b75; stroke-width: 2; fill: none; }

/* overlays */
.float-widget { position: absolute; left: 1852px; top: 729px; width: 60px; height: 118px; background: #b5b7ba; border-radius: 10px 0 0 0; color: #fff; }
.fw-top { height: 39px; padding: 9px 0 0 19px; border-bottom: 1px solid #a9b4b8; }
.fw-shield { display: block; width: 20px; height: 23px; }
.fw-mid { height: 43px; padding: 6px 0 0 10px; border-bottom: 1px solid #a9b4b8; display: flex; flex-direction: column; }
.fw-num { font: 700 19px/24px "Open Sans", sans-serif; }
.fw-bar { display: block; width: 40px; height: 5px; background: #4a4f5a; border-radius: 2px; margin-top: 0; }
.fw-fill { display: block; width: 11px; height: 5px; background: #3bb6a0; border-radius: 2px; }
.fw-low { padding: 5px 0 0 20px; display: flex; flex-direction: column; font-size: 12px; line-height: 14px; }
.fw-small { font-weight: 700; }
.fw-tiny { margin-top: 2px; }
.watermark { position: absolute; right: 16px; top: 816px; font-size: 19px; line-height: 24px; color: #8a8a8a; text-shadow: 0 0 2px #fff; white-space: nowrap; font-weight: 400; }
```
